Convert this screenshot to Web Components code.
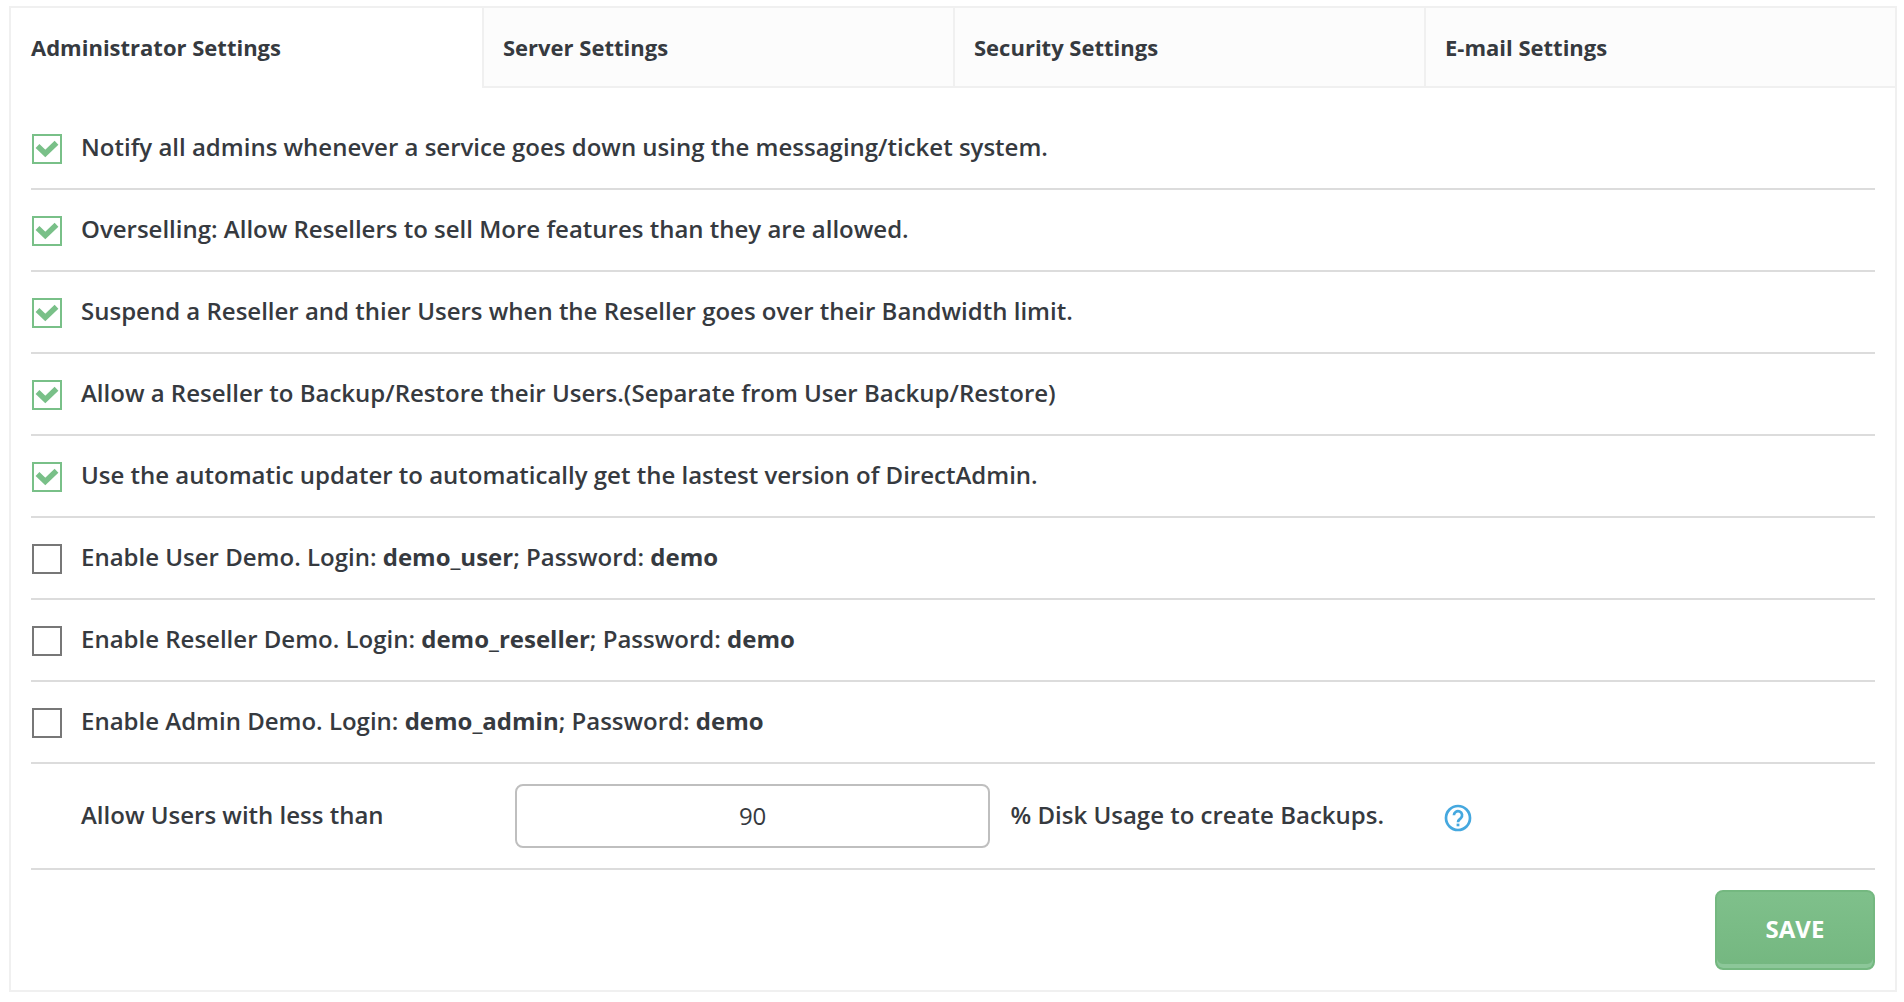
<!DOCTYPE html>
<html lang="en">
<head>
<meta charset="utf-8">
<title>Administrator Settings</title>
<style>
  body { margin: 6px 7px 10px 9px; background: #fff; color: #363a3f; font: 600 24px/32px "Open Sans", sans-serif; }
</style>
</head>
<body>
<settings-page></settings-page>

<template id="settings-page">
  <style>
    :host { display: block; border: 2px solid #f0f0f0; background: #fff; }
    nav { display: grid; grid-template-columns: repeat(4, 1fr); }
    form { padding: 20px; margin: 0; }
    footer { display: flex; justify-content: flex-end; padding-top: 20px; }
    b { font-weight: 700; }
  </style>
  <nav aria-label="Settings">
    <tab-link active>Administrator Settings</tab-link>
    <tab-link>Server Settings</tab-link>
    <tab-link>Security Settings</tab-link>
    <tab-link>E-mail Settings</tab-link>
  </nav>
  <form>
    <check-row checked>Notify all admins whenever a service goes down using the messaging/ticket system.</check-row>
    <check-row checked>Overselling: Allow Resellers to sell More features than they are allowed.</check-row>
    <check-row checked>Suspend a Reseller and thier Users when the Reseller goes over their Bandwidth limit.</check-row>
    <check-row checked>Allow a Reseller to Backup/Restore their Users.(Separate from User Backup/Restore)</check-row>
    <check-row checked>Use the automatic updater to automatically get the lastest version of DirectAdmin.</check-row>
    <check-row>Enable User Demo. Login: <b>demo_user</b>; Password: <b>demo</b></check-row>
    <check-row>Enable Reseller Demo. Login: <b>demo_reseller</b>; Password: <b>demo</b></check-row>
    <check-row>Enable Admin Demo. Login: <b>demo_admin</b>; Password: <b>demo</b></check-row>
    <number-row value="90">Allow Users with less than<span slot="suffix">% Disk Usage to create Backups.</span></number-row>
    <footer><save-button>SAVE</save-button></footer>
  </form>
</template>

<template id="tab-link">
  <style>
    :host { display: block; border-left: 2px solid #f0f0f0; border-bottom: 2px solid #f0f0f0; background: #fcfcfc; }
    :host([active]) { border-color: transparent; border-left: 0; background: #fff; }
    a { display: block; padding: 23px 19px; color: inherit; text-decoration: none; font-weight: 700; font-size: 22px; line-height: 32px; }
    :host([active]) a { padding-left: 20px; }
  </style>
  <a href="#"><slot></slot></a>
</template>

<template id="check-row">
  <style>
    :host { display: block; border-bottom: 2px solid #dcdcdc; }
    label { display: flex; align-items: flex-start; gap: 19px; padding: 23px 1px 24px; cursor: pointer; }
    .box { display: grid; flex: none; margin-top: 3px; }
    input, svg { grid-area: 1 / 1; width: 30px; height: 30px; margin: 0; }
    input { appearance: none; box-sizing: border-box; border: 2px solid #777; background: #fff; }
    input:checked { border-color: #79c088; }
    svg { visibility: hidden; pointer-events: none; }
    input:checked + svg { visibility: visible; }
  </style>
  <label>
    <span class="box">
      <input type="checkbox">
      <svg viewBox="0 0 30 30" aria-hidden="true"><path d="M5.500 12L13.300 19.500L24.500 8.800" fill="none" stroke="#79c088" stroke-width="5.500"/></svg>
    </span>
    <span><slot></slot></span>
  </label>
</template>

<template id="number-row">
  <style>
    :host { display: block; border-bottom: 2px solid #dcdcdc; }
    div { display: grid; grid-template-columns: 414fr 476fr 414fr 431fr; column-gap: 20px; align-items: center; padding: 20px 0 20px 50px; }
    input { box-sizing: border-box; width: 100%; min-width: 0; height: 64px; padding: 0 0 2px; border: 2px solid #bfbfbf; border-radius: 8px; background: #fff; color: inherit; font: 400 24px/32px "Open Sans", sans-serif; text-align: center; }
    label, span { padding-bottom: 2px; white-space: nowrap; }
    button { display: block; justify-self: start; padding: 4px 0 0; border: 0; background: none; cursor: pointer; }
    svg { display: block; width: 28px; height: 28px; }
  </style>
  <div>
    <label for="amount"><slot></slot></label>
    <input id="amount" type="text" inputmode="numeric">
    <span><slot name="suffix"></slot></span>
    <button type="button" aria-label="Help">
      <svg viewBox="0 0 28 28" fill="none" stroke="#45a8df"><circle cx="14" cy="14" r="12" stroke-width="2.700"/><path d="M9.900 11.200a4.100 4.100 0 1 1 6.900 3c-1.500 1.300-2.800 1.900-2.800 4" stroke-width="2.700"/><path d="M14 19.600v2.700" stroke-width="2.800"/></svg>
    </button>
  </div>
</template>

<template id="save-button">
  <style>
    :host { display: block; }
    button { display: block; min-width: 160px; padding: 21px 48px 23px; border: 2px solid #74b880; border-radius: 8px; background: linear-gradient(#7fc08b, #74b780); box-shadow: inset 0 -4px #8cc799; color: #fff; font: 700 24px/32px "Open Sans", sans-serif; cursor: pointer; }
  </style>
  <button type="button"><slot></slot></button>
</template>

<script>
  class TemplateElement extends HTMLElement {
    constructor() {
      super();
      const template = document.getElementById(this.localName);
      this.attachShadow({ mode: "open" }).append(template.content.cloneNode(true));
    }
  }
  customElements.define("tab-link", class extends TemplateElement {
    connectedCallback() {
      if (this.hasAttribute("active")) this.shadowRoot.querySelector("a").setAttribute("aria-current", "page");
    }
  });
  customElements.define("check-row", class extends TemplateElement {
    connectedCallback() {
      this.shadowRoot.querySelector("input").checked = this.hasAttribute("checked");
    }
  });
  customElements.define("number-row", class extends TemplateElement {
    connectedCallback() {
      this.shadowRoot.querySelector("input").value = this.getAttribute("value");
    }
  });
  customElements.define("save-button", class extends TemplateElement {});
  customElements.define("settings-page", class extends TemplateElement {});
</script>
</body>
</html>
